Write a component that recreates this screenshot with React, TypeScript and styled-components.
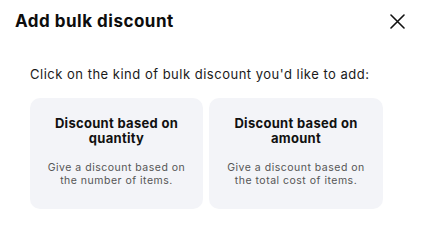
import React from 'react'
import styled, { createGlobalStyle } from 'styled-components'

const GlobalStyle = createGlobalStyle`
  html, body {
    margin: 0;
    padding: 0;
    background: #ffffff;
  }
  body {
    font-family: Inter, 'Open Sans', sans-serif;
    color: #111111;
  }
`

const Modal = styled.div`
  width: 422px;
  height: 244px;
  box-sizing: border-box;
  display: flex;
  flex-direction: column;
`

const Header = styled.div`
  display: flex;
  align-items: center;
  justify-content: space-between;
  padding: 10px 17px 0 15px;
  height: 22px;
`

const Title = styled.h2`
  margin: 0;
  font-size: 17px;
  font-weight: 700;
  letter-spacing: 0.5px;
  color: #0d0d0d;
`

const CloseButton = styled.button`
  width: 15px;
  height: 15px;
  padding: 0;
  border: none;
  background: none;
  display: flex;
  cursor: pointer;
`

const Body = styled.div`
  padding: 33px 39px 0 30px;
  display: flex;
  flex-direction: column;
`

const Prompt = styled.p`
  margin: 0;
  font-size: 13px;
  line-height: 18px;
  letter-spacing: 0.5px;
  color: #1a1a1a;
`

const CardGrid = styled.div`
  display: grid;
  grid-template-columns: 173px 174px;
  gap: 6px;
  margin-top: 15px;
`

const Card = styled.button`
  height: 111px;
  border: none;
  border-radius: 10px;
  background: #f3f4f8;
  padding: 18px 8px 0;
  display: flex;
  flex-direction: column;
  align-items: center;
  text-align: center;
  font-family: inherit;
  cursor: pointer;
`

const CardTitle = styled.div`
  font-size: 13px;
  font-weight: 700;
  line-height: 15px;
  letter-spacing: 0.3px;
  color: #111111;
`

const CardText = styled.div`
  margin-top: 15px;
  font-size: 10.5px;
  line-height: 13px;
  letter-spacing: 0.5px;
  color: #555555;
`

const options = [
  {
    title: ['Discount based on', 'quantity'],
    text: ['Give a discount based on', 'the number of items.'],
  },
  {
    title: ['Discount based on', 'amount'],
    text: ['Give a discount based on', 'the total cost of items.'],
  },
]

const App: React.FC = () => {
  return (
    <>
      <GlobalStyle />
      <Modal>
        <Header>
          <Title>Add bulk discount</Title>
          <CloseButton aria-label="Close">
            <svg width="15" height="15" viewBox="0 0 15 15">
              <path d="M1 1 L14 14 M14 1 L1 14" stroke="#111" strokeWidth="1.6" strokeLinecap="round" />
            </svg>
          </CloseButton>
        </Header>
        <Body>
          <Prompt>Click on the kind of bulk discount you'd like to add:</Prompt>
          <CardGrid>
            {options.map((o) => (
              <Card key={o.title[1]}>
                <CardTitle>
                  {o.title[0]}
                  <br />
                  {o.title[1]}
                </CardTitle>
                <CardText>
                  {o.text[0]}
                  <br />
                  {o.text[1]}
                </CardText>
              </Card>
            ))}
          </CardGrid>
        </Body>
      </Modal>
    </>
  )
}

export default App
